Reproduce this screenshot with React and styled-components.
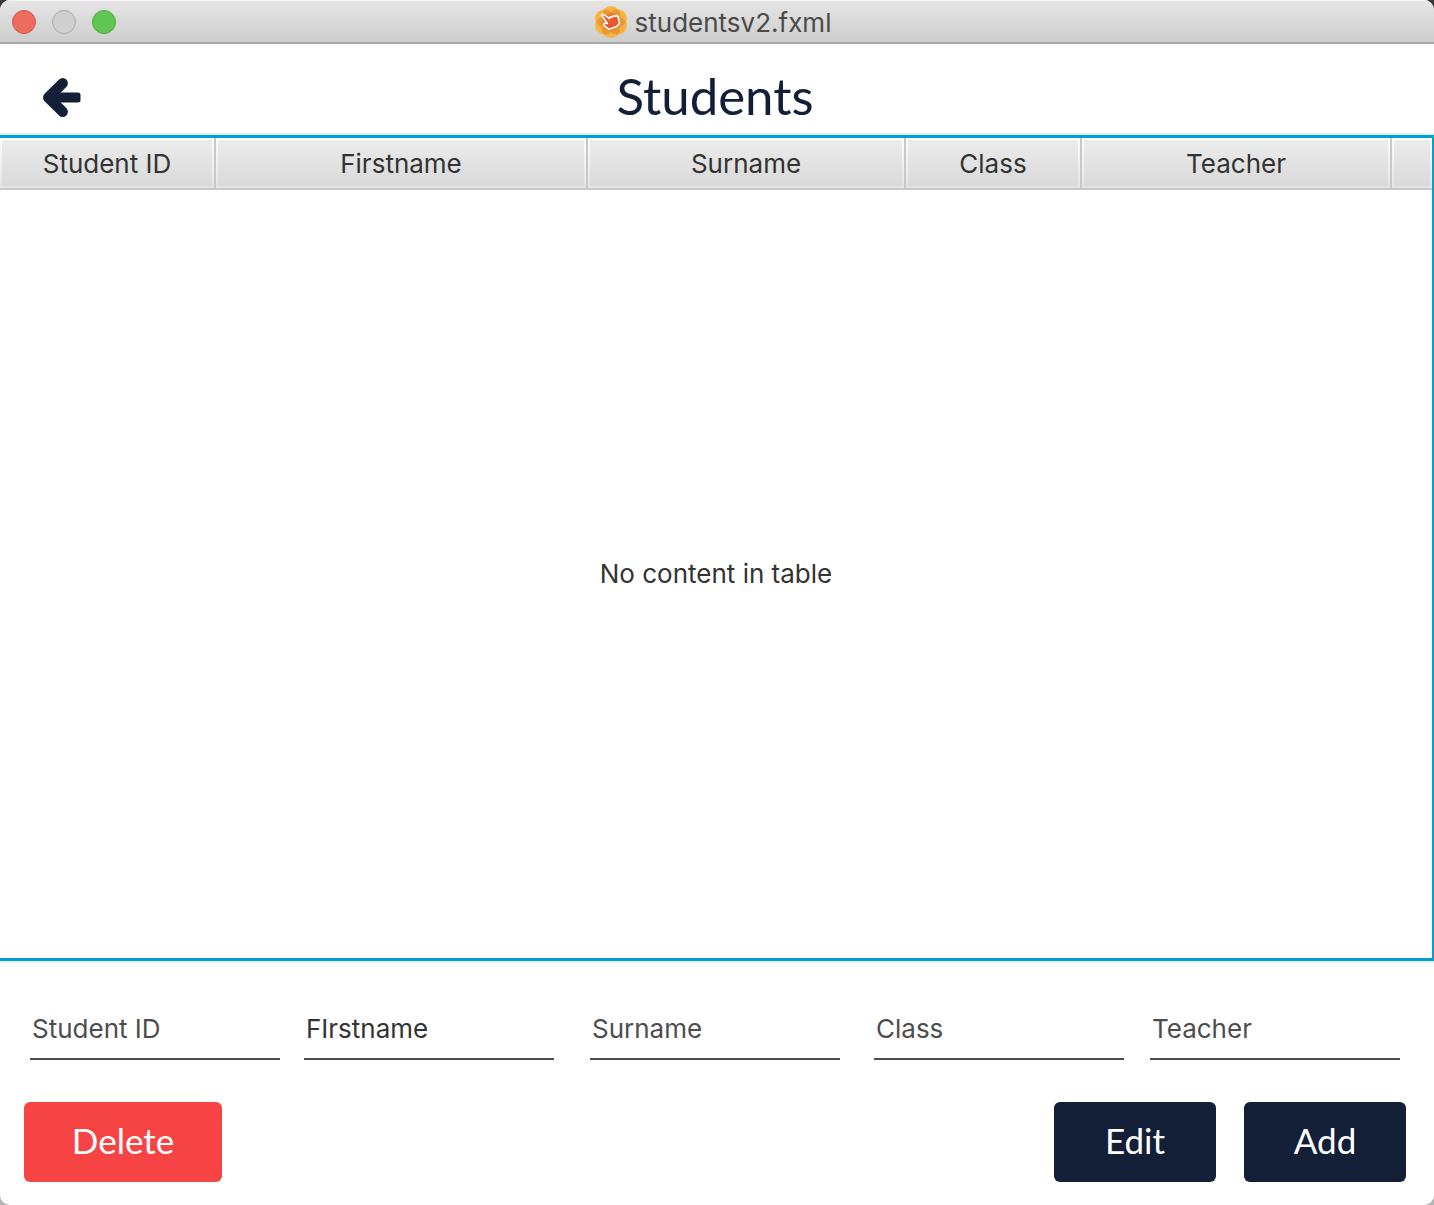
import React from "react";
import styled, { createGlobalStyle } from "styled-components";

const ui = `Inter, "Liberation Sans", sans-serif`;
const display = `Lato, "Open Sans", sans-serif`;
const navy = "#131f37";

const GlobalStyle = createGlobalStyle`
  *, *::before, *::after { box-sizing: border-box; }
  html { background: linear-gradient(#3a3a3c, #b4b4b4); }
  body { margin: 0; font-family: ${ui}; color: #333; }
`;

const Window = styled.main`
  display: flex;
  flex-direction: column;
  min-height: 100vh;
  background: #fff;
  border-radius: 10px;
  overflow: hidden;
`;

const TitleBar = styled.header`
  display: grid;
  grid-template-columns: 1fr auto 1fr;
  align-items: center;
  height: 44px;
  padding: 0 20px 0 12px;
  background: linear-gradient(#e6e6e6, #cccccc);
  box-shadow: inset 0 1px 0 #f4f4f4, inset 0 -2px 0 #a8a8a8;
`;

const Lights = styled.div`
  display: flex;
  gap: 16px;
`;

const Light = styled.button`
  width: 24px;
  height: 24px;
  padding: 0;
  border: 1px solid ${(p) => p.$edge};
  border-radius: 50%;
  background: ${(p) => p.$fill};
`;

const FileName = styled.div`
  display: flex;
  align-items: center;
  gap: 8px;
  color: #4a4a4a;
`;

const FileLabel = styled.span`
  padding-top: 2px;
  font-size: 26px;
  line-height: 32px;
`;

const PageHeader = styled.div`
  display: grid;
  grid-template-columns: 1fr auto 1fr;
  align-items: center;
  height: 91px;
  padding: 16px 44px 0 40px;
`;

const BackButton = styled.button`
  display: flex;
  justify-self: start;
  padding: 0 3px;
  border: 0;
  background: none;
  color: ${navy};
`;

const PageTitle = styled.h1`
  margin: 0;
  padding-bottom: 3px;
  font-family: ${display};
  font-size: 51px;
  font-weight: 400;
  line-height: 60px;
  color: ${navy};
`;

const TableFrame = styled.section`
  display: grid;
  flex: 1;
  border: solid #039ed3;
  border-width: 3px 2px 3px 0;
  box-shadow: 0 0 0 2px #e0f2f9;
`;

const Table = styled.table`
  width: 100%;
  height: 100%;
  table-layout: fixed;
  border-spacing: 0;
  font-size: 26px;
  line-height: 32px;
`;

const Col = styled.col`
  width: ${(p) => (p.$width ? `${p.$width}px` : "auto")};
`;

const HeadCell = styled.th`
  height: 52px;
  padding: 2px;
  border: solid #c8c8c8;
  border-width: 0 ${(p) => (p.$last ? 0 : 2)}px 2px 0;
  background:
    linear-gradient(#ececec, #d9d9d9) content-box,
    linear-gradient(#ffffff, #e4e4e4) padding-box;
  font-weight: 400;
`;

const HeadLabel = styled.div`
  height: 46px;
  line-height: 48px;
`;

const EmptyCell = styled.td`
  padding: 0;
  text-align: center;
  vertical-align: middle;
`;

const Form = styled.form`
  padding: 50px 28px 23px 24px;
`;

const Fields = styled.div`
  display: grid;
  grid-template-columns: 274fr 286fr 284fr 276fr 250fr;
  padding: 0 6px;
`;

const Field = styled.input`
  width: 250px;
  height: 49px;
  padding: 0 2px 12px;
  border: 0;
  border-bottom: 2px solid #4d4d4d;
  border-radius: 0;
  outline: 0;
  background: none;
  font-family: ${ui};
  font-size: 26px;
  color: #333;
  &::placeholder { color: #4d4d4d; opacity: 1; }
`;

const Actions = styled.div`
  display: flex;
  gap: 28px;
  margin-top: 42px;
`;

const Action = styled.button`
  width: ${(p) => (p.$danger ? 198 : 162)}px;
  height: 80px;
  margin-right: ${(p) => (p.$danger ? "auto" : 0)};
  padding: 0 0 4px;
  border: 0;
  border-radius: 6px;
  background: ${(p) => (p.$danger ? "#f64444" : navy)};
  font-family: ${display};
  font-size: 35px;
  color: #fff;
`;

const columns = [
  { name: "Student ID", width: 216 },
  { name: "Firstname", width: 372 },
  { name: "Surname", width: 318 },
  { name: "Class", width: 176 },
  { name: "Teacher", width: 310 },
];

const fields = [
  { label: "Student ID" },
  { label: "Firstname", value: "FIrstname" },
  { label: "Surname" },
  { label: "Class" },
  { label: "Teacher" },
];

function FileIcon() {
  return (
    <svg width="32" height="32" viewBox="0 0 32 32" aria-hidden="true">
      <g fill="#f6b53f">
        <circle cx="16" cy="9" r="9" />
        <circle cx="16" cy="23" r="9" />
        <circle cx="9" cy="12.5" r="9" />
        <circle cx="23" cy="12.5" r="9" />
        <circle cx="9" cy="19.5" r="9" />
        <circle cx="23" cy="19.5" r="9" />
      </g>
      <g fill="#ea8c34" fillOpacity=".75">
        <ellipse cx="16" cy="16" rx="14" ry="6.5" />
        <ellipse cx="16" cy="16" rx="14" ry="6.5" transform="rotate(60 16 16)" />
        <ellipse cx="16" cy="16" rx="14" ry="6.5" transform="rotate(120 16 16)" />
      </g>
      <circle cx="16" cy="16" r="8.5" fill="#ec7a2c" />
      <path
        d="M6.6 9.200C7 8.200 8.300 8.200 9.200 8.900L14.500 12.600 15.200 10.800 17.300 11.200 18.300 9.800 20.300 10.300 21.800 9.500 23.200 11.200 24.500 17.300 21.500 20.500 14.200 23.300 8.800 19.300 9.300 17.300 12.400 17.400Z"
        fill="#e8582b"
        stroke="#fff"
        strokeWidth="1.600"
        strokeLinejoin="round"
      />
    </svg>
  );
}

function BackArrow() {
  return (
    <svg width="38" height="39" viewBox="0 0 38 39" aria-hidden="true">
      <path
        d="M19.700 5.200 5.200 19.500 19.700 33.800"
        fill="none"
        stroke="currentColor"
        strokeWidth="10.400"
        strokeLinecap="round"
        strokeLinejoin="round"
      />
      <path d="M6 14.400H35a2.500 2.500 0 0 1 2.500 2.500V22a2.500 2.500 0 0 1-2.500 2.500H6Z" fill="currentColor" />
    </svg>
  );
}

export default function App() {
  return (
    <>
      <GlobalStyle />
      <Window>
        <TitleBar>
          <Lights>
            <Light type="button" aria-label="Close" $fill="#ee6b60" $edge="#d6544a" />
            <Light type="button" aria-label="Minimize" $fill="#cfcfcf" $edge="#ababab" />
            <Light type="button" aria-label="Zoom" $fill="#62c655" $edge="#4fa93f" />
          </Lights>
          <FileName>
            <FileIcon />
            <FileLabel>studentsv2.fxml</FileLabel>
          </FileName>
        </TitleBar>
        <PageHeader>
          <BackButton type="button" aria-label="Back">
            <BackArrow />
          </BackButton>
          <PageTitle>Students</PageTitle>
        </PageHeader>
        <TableFrame>
          <Table>
            <colgroup>
              {columns.map((c) => (
                <Col key={c.name} $width={c.width} />
              ))}
              <Col />
            </colgroup>
            <thead>
              <tr>
                {columns.map((c) => (
                  <HeadCell key={c.name} scope="col">
                    <HeadLabel>{c.name}</HeadLabel>
                  </HeadCell>
                ))}
                <HeadCell $last>
                  <HeadLabel />
                </HeadCell>
              </tr>
            </thead>
            <tbody>
              <tr>
                <EmptyCell colSpan={columns.length + 1}>No content in table</EmptyCell>
              </tr>
            </tbody>
          </Table>
        </TableFrame>
        <Form onSubmit={(e) => e.preventDefault()}>
          <Fields>
            {fields.map((f) => (
              <Field
                key={f.label}
                type="text"
                aria-label={f.label}
                placeholder={f.label}
                defaultValue={f.value}
              />
            ))}
          </Fields>
          <Actions>
            <Action type="button" $danger>Delete</Action>
            <Action type="button">Edit</Action>
            <Action type="submit">Add</Action>
          </Actions>
        </Form>
      </Window>
    </>
  );
}
